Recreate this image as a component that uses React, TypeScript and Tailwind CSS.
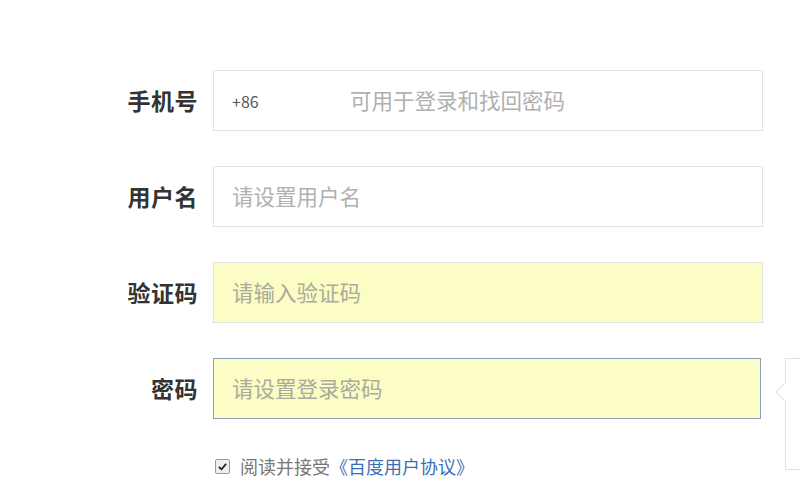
import React from 'react';

const FONT = { fontFamily: '"Noto Sans CJK SC", "Liberation Sans", sans-serif' };

interface Campo {
  label: string;
  placeholder: string;
  yellow?: boolean;
  focused?: boolean;
  prefix?: string;
}

const CAMPOS: Campo[] = [
  { label: '手机号', placeholder: '可用于登录和找回密码', prefix: '+86' },
  { label: '用户名', placeholder: '请设置用户名' },
  { label: '验证码', placeholder: '请输入验证码', yellow: true },
  { label: '密码', placeholder: '请设置登录密码', yellow: true, focused: true },
];

function Fila({ campo }: { campo: Campo }) {
  const bg = campo.yellow ? 'bg-[#fbfdc4]' : 'bg-white';
  const border = campo.focused ? 'border-[#8d9fb6]' : 'border-[#e3e3e3]';
  return (
    <div className="flex items-center h-[61px]">
      <div className="w-[98px] mr-[15px] text-right text-[23px] font-bold text-[#333] tracking-[0.5px]">{campo.label}</div>
      <div
        className={`flex items-center h-[61px] border ${border} ${bg} ${campo.focused ? 'w-[548px]' : 'w-[550px]'} pl-[18px]`}
      >
        {campo.prefix && <span className="text-[16px] text-[#555] w-[118px]">{campo.prefix}</span>}
        <span className={`text-[21.5px] ${campo.yellow ? 'text-[#a9ab9c]' : 'text-[#b0b0b0]'}`}>{campo.placeholder}</span>
      </div>
    </div>
  );
}

export default function App() {
  return (
    <div className="relative w-[800px] h-[500px] bg-white overflow-hidden" style={FONT}>
      <div className="flex flex-col gap-[35px] pt-[70px] pl-[100px]">
        {CAMPOS.map((c) => (
          <Fila key={c.label} campo={c} />
        ))}
      </div>

      {/* Checkbox de aceptación */}
      <div className="flex items-center pl-[215px] mt-[34px] text-[18px]">
        <span className="flex items-center justify-center w-[15px] h-[15px] border border-[#999] rounded-[2px] bg-[#eee] mr-[10px]">
          <svg viewBox="0 0 12 12" className="w-[11px] h-[11px]">
            <path d="M2 6.5 L5 9 L10 3" fill="none" stroke="#222" strokeWidth="2" />
          </svg>
        </span>
        <span className="text-[#777]">阅读并接受</span>
        <span className="text-[#3a6fb8]">《百度用户协议》</span>
      </div>

      {/* Tooltip lateral */}
      <div className="absolute left-[785px] top-[358px] w-[40px] h-[112px] border border-[#e2e2e2] bg-white">
        <div className="absolute -left-[8px] top-[26px] w-[14px] h-[14px] rotate-45 border-l border-b border-[#e2e2e2] bg-white" />
      </div>
    </div>
  );
}
